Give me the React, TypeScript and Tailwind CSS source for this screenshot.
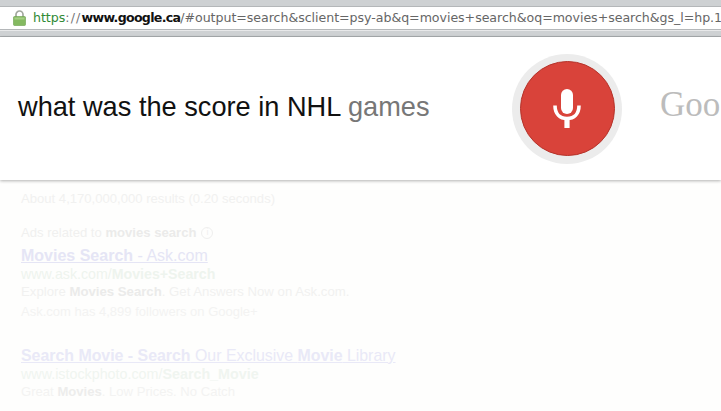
import React from 'react';

function LockIcon() {
  return (
    <svg width="13" height="16" viewBox="0 0 13 16" className="shrink-0">
      <path d="M3 8V4.5a3.5 3.5 0 0 1 7 0V8" fill="none" stroke="#a3a89f" strokeWidth="1.7" />
      <rect x="0.5" y="6.5" width="12" height="9" rx="1" fill="#84b960" stroke="#6aa04c" strokeWidth="0.6" />
      <rect x="1.5" y="7.5" width="10" height="2" fill="#a5d083" />
    </svg>
  );
}

function MicIcon() {
  return (
    <svg width="28" height="39" viewBox="0 0 28 39">
      <rect x="8" y="0" width="12" height="25" rx="6" fill="#fff" />
      <path d="M2 16.5c0 8.5 5 13 12 13s12-4.5 12-13" fill="none" stroke="#fff" strokeWidth="3.6" />
      <rect x="11.4" y="29" width="5.2" height="10" fill="#fff" />
    </svg>
  );
}

function AdLine({ children, className }: { children: React.ReactNode; className: string }) {
  return <div className={`whitespace-nowrap ${className}`}>{children}</div>;
}

export default function App() {
  return (
    <div className="relative h-[411px] w-[721px] overflow-hidden bg-[#fefefd] font-['Liberation_Sans',Arial,sans-serif]">
      {/* browser chrome */}
      <div className="h-[37px] border-b border-[#a9adaf] bg-[#ced1d3] pt-[6px]">
        <div className="flex h-[24px] items-center gap-[7px] overflow-hidden border-y border-[#b4b7b9] bg-white pl-[13px] font-['DejaVu_Sans',sans-serif] text-[12.6px] tracking-[-0.04px] whitespace-nowrap shadow-[0_1px_0_#e8e9ea]">
          <LockIcon />
          <div>
            <span className="text-[#2f8a35]">https</span>
            <span className="tracking-[1.2px] text-[#777]">://</span>
            <span className="font-bold tracking-[-0.7px] text-[#111]">www.google.ca</span>
            <span className="text-[#666]">/#output=search&amp;sclient=psy-ab&amp;q=movies+search&amp;oq=movies+search&amp;gs_l=hp.15</span>
          </div>
        </div>
      </div>

      {/* voice search panel */}
      <div className="relative z-10 flex h-[143px] items-center bg-white shadow-[0_1px_3px_rgba(0,0,0,0.3)]">
        <div className="w-[512px] shrink-0 whitespace-nowrap pb-[2px] pl-[18px] text-[27.2px] text-[#111]">
          what was the score in NHL <span className="text-[#777]">games</span>
        </div>
        <div className="flex h-[110px] w-[110px] shrink-0 items-center justify-center rounded-full bg-[#ececec]">
          <div className="flex h-[95px] w-[95px] items-center justify-center rounded-full border border-[#b5332a] bg-[#d9433a]">
            <MicIcon />
          </div>
        </div>
        <div className="ml-[38px] pb-[6px] font-['Liberation_Serif',serif] text-[35px] text-[#bcbcbc]">
          Goog
        </div>
      </div>

      {/* faded results */}
      <div className="pl-[21px] pt-[10px]">
        <AdLine className="text-[13.1px] leading-[18px] text-[#f1f1f0]">About 4,170,000,000 results (0.20 seconds)</AdLine>
        <div className="mt-[16px] flex items-center gap-[5px]">
          <AdLine className="text-[13.1px] leading-[18px] text-[#f0f0ef]">
            Ads related to <b className="text-[#ebebea]">movies search</b>
          </AdLine>
          <span className="flex h-[12px] w-[12px] items-center justify-center rounded-full border border-[#efefee] text-[9px] text-[#efefee]">i</span>
        </div>
        <AdLine className="mt-[4px] text-[16px] leading-[20px] text-[#e5e5f5] underline">
          <b>Movies Search</b> - Ask.com
        </AdLine>
        <AdLine className="text-[14.2px] leading-[17px] text-[#eef4ee]">
          www.ask.com/<b>Movies+Search</b>
        </AdLine>
        <AdLine className="text-[13.2px] leading-[18px] text-[#f1f1f0]">
          Explore <b className="text-[#ebebea]">Movies Search</b>. Get Answers Now on Ask.com.
        </AdLine>
        <AdLine className="mt-[2px] text-[13px] leading-[18px] text-[#f3f3f2]">Ask.com has 4,899 followers on Google+</AdLine>
        <AdLine className="mt-[25px] text-[15.9px] leading-[20px] text-[#e9e9f7] underline">
          <b>Search Movie - Search</b> Our Exclusive <b>Movie</b> Library
        </AdLine>
        <AdLine className="text-[14.3px] leading-[17px] text-[#f0f5f0]">
          www.istockphoto.com/<b>Search_Movie</b>
        </AdLine>
        <AdLine className="text-[13.1px] leading-[18px] text-[#f3f3f2]">
          Great <b className="text-[#ededec]">Movies</b>. Low Prices. No Catch
        </AdLine>
      </div>
    </div>
  );
}
